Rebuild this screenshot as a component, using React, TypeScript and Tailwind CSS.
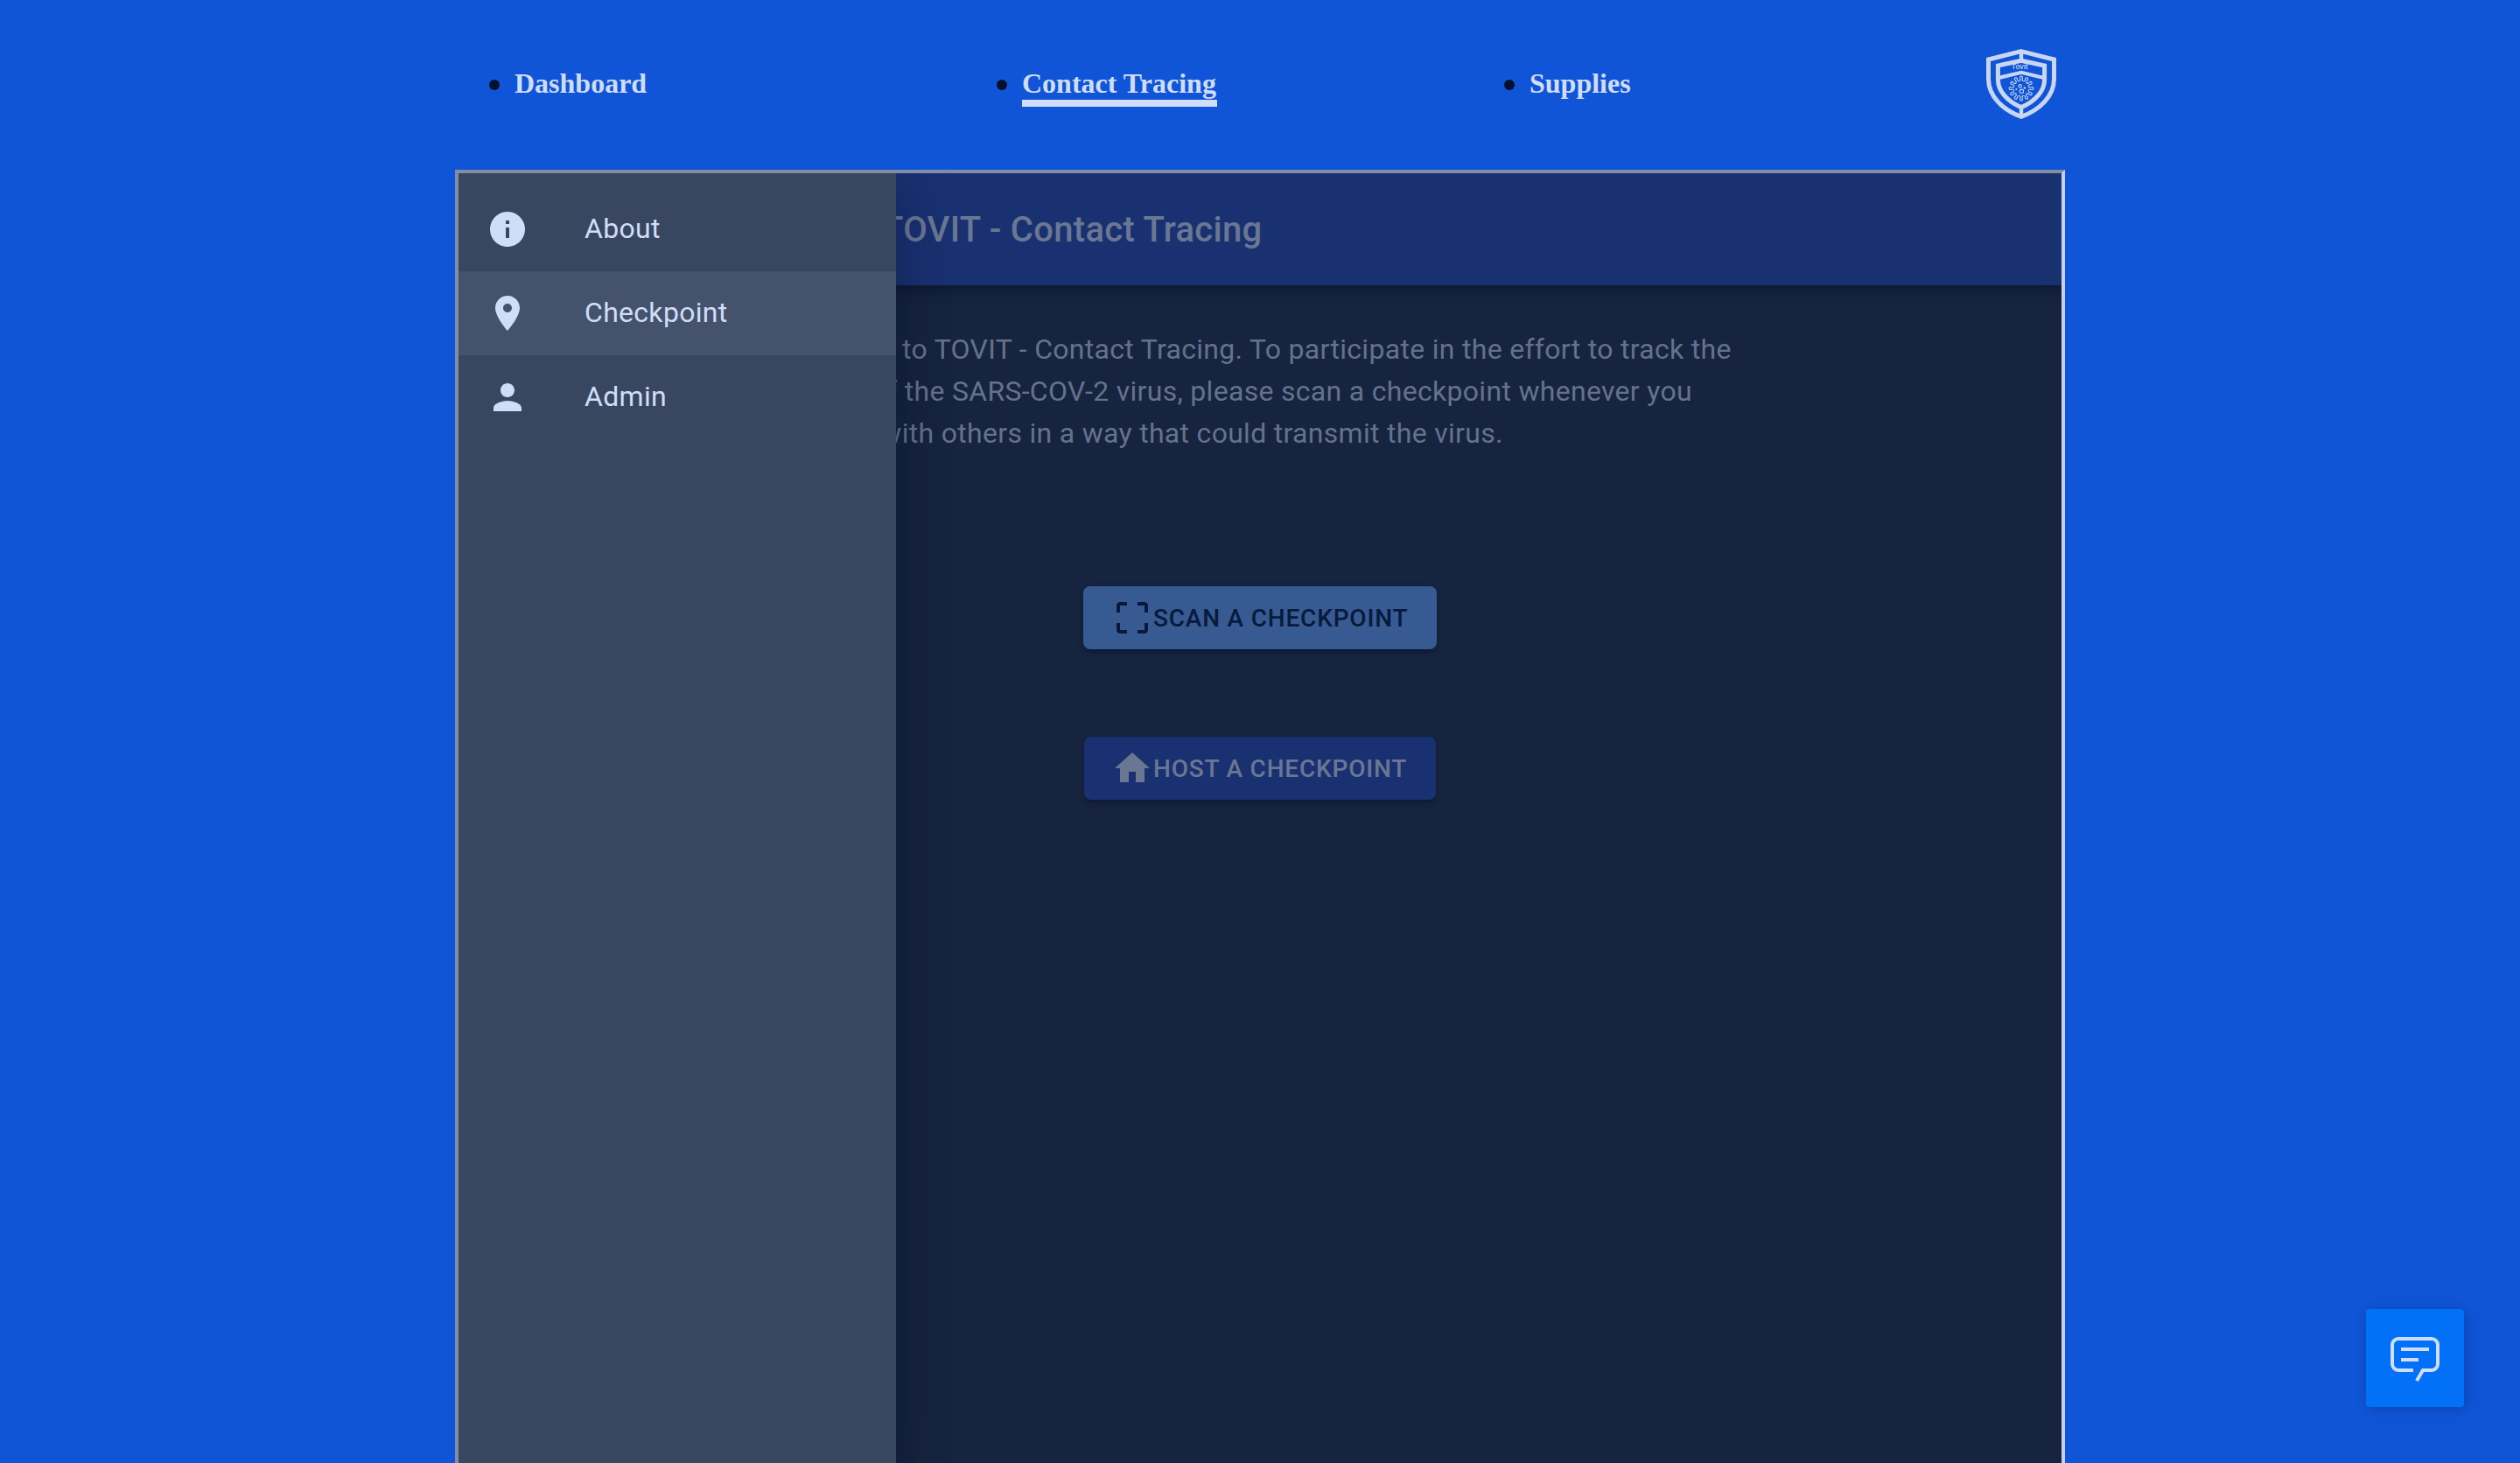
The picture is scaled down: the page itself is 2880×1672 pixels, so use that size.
import React from "react";

const navItems = [
  { label: "Dashboard", active: false },
  { label: "Contact Tracing", active: true },
  { label: "Supplies", active: false },
];

const iconPaths = {
  info: "M12 2C6.48 2 2 6.48 2 12s4.48 10 10 10 10-4.48 10-10S17.52 2 12 2zm1 15h-2v-6h2v6zm0-8h-2V7h2v2z",
  place: "M12 2C8.13 2 5 5.13 5 9c0 5.25 7 13 7 13s7-7.75 7-13c0-3.87-3.13-7-7-7zm0 9.5c-1.38 0-2.5-1.12-2.5-2.5s1.12-2.5 2.5-2.5 2.5 1.12 2.5 2.5-1.12 2.5-2.5 2.5z",
  person: "M12 12c2.21 0 4-1.79 4-4s-1.79-4-4-4-4 1.79-4 4 1.79 4 4 4zm0 2c-2.67 0-8 1.34-8 4v2h16v-2c0-2.66-5.33-4-8-4z",
  scan: "M3 5v4h2V5h4V3H5c-1.1 0-2 .9-2 2zm2 10H3v4c0 1.1.9 2 2 2h4v-2H5v-4zm14 4h-4v2h4c1.1 0 2-.9 2-2v-4h-2v4zm0-16h-4v2h4v4h2V5c0-1.1-.9-2-2-2z",
  home: "M10 20v-6h4v6h5v-8h3L12 3 2 12h3v8z",
};

function Icon({ name }: { name: keyof typeof iconPaths }) {
  return (
    <svg viewBox="0 0 24 24" className="size-12 shrink-0 fill-current">
      <path d={iconPaths[name]} />
    </svg>
  );
}

const spikes = Array.from({ length: 12 }, (_, i) => i * 30);

function Logo() {
  return (
    <svg viewBox="0 0 80 80" className="size-20" fill="none">
      <g stroke="#c8d6f2" strokeWidth="5">
        <path d="M40 2.6 L77.5 12 V34 C77.5 54 61 70 40 77.3 C19 70 2.5 54 2.5 34 V12 Z" />
        <path d="M40 13.2 L66.6 19 V35 C66.6 48 56 60 40 66.6 C24 60 13.4 48 13.4 35 V19 Z" />
        <path d="M14 33 L40 26.8 L66 33" strokeWidth="4.2" />
        <path d="M40 3 V13 M40 67 V77" strokeWidth="4.4" />
      </g>
      <text x="38.5" y="23.4" textAnchor="middle" fontFamily="Open Sans, sans-serif" fontWeight="600" fontSize="8" fill="#c8d6f2">
        Tovit
      </text>
      <g stroke="#c8d6f2" strokeWidth="1.1">
        {spikes.map((angle) => (
          <path
            key={angle}
            transform={`rotate(${angle} 40 45)`}
            d="M37.8 36.8 Q39.1 36.2 39 34.6 L38.6 33.2 a1.5 1.5 0 1 1 2.8 0 L41 34.6 Q40.9 36.2 42.2 36.8"
          />
        ))}
        <circle cx="38.7" cy="42.3" r="1.7" />
        <circle cx="40.4" cy="48.3" r="2.2" />
      </g>
      <g fill="#c8d6f2">
        <circle cx="43.9" cy="44.4" r="1.2" />
        <circle cx="34.4" cy="46" r="1" />
      </g>
    </svg>
  );
}

function DrawerItem({ icon, label, selected }: { icon: keyof typeof iconPaths; label: string; selected?: boolean }) {
  return (
    <li className={selected ? "flex h-24 items-center bg-[#44526b] px-8" : "flex h-24 items-center px-8"}>
      <span className="w-28">
        <Icon name={icon} />
      </span>
      <span className="pb-[2px] text-[32px] leading-[48px] tracking-[0.00938em]">{label}</span>
    </li>
  );
}

export default function App() {
  return (
    <div className="relative flex h-[1672px] w-[2880px] flex-col overflow-hidden bg-[#1055d8]">
      <header className="flex h-[194px] shrink-0 pl-[559px]">
        <ul className="flex pt-[78px] font-['Liberation_Serif',serif] text-[32px] leading-[34px] font-bold text-[#cfddf8]">
          {navItems.map((item) => (
            <li key={item.label} className="flex w-[580px] items-start">
              <span className="mt-[13px] mr-[17px] size-3 rounded-full bg-[#03112c]" />
              <a className={item.active ? "border-b-8 border-[#cfddf8] pr-px pb-[2px]" : ""}>{item.label}</a>
            </li>
          ))}
        </ul>
        <div className="-ml-[29px] pt-14">
          <Logo />
        </div>
      </header>

      <main className="ml-[520px] flex h-[1478px] w-[1840px] border-4 border-b-0 border-t-[#7f8da5] border-r-[#c3d1ea] border-l-[#7f8da5] bg-[#16243f] font-[Roboto,sans-serif]">
        <div className="relative flex w-full flex-col overflow-hidden">
          <div className="z-10 flex h-32 shrink-0 items-center bg-[#1a3171] pt-[2px] pl-[484px] shadow-[0_4px_8px_-2px_rgba(3,17,44,0.2),0_8px_10px_0_rgba(3,17,44,0.14),0_2px_20px_0_rgba(3,17,44,0.12)]">
            <h1 className="text-[40px] leading-[64px] font-medium tracking-[0.0075em] text-[#697792]">TOVIT - Contact Tracing</h1>
          </div>
          <p className="mt-[49px] ml-[364px] text-[32px] leading-[48px] tracking-[0.00938em] whitespace-nowrap text-[#64728e]">
            Welcome to TOVIT - Contact Tracing. To participate in the effort to track the
            <br />
            spread of the SARS-COV-2 virus, please scan a checkpoint whenever you
            <br />
            interact with others in a way that could transmit the virus.
          </p>
          <div className="mt-[151px] flex flex-col items-center gap-[100px] text-[28px] leading-[49px] font-medium tracking-[0.02857em]">
            <button className="flex h-[72px] w-[404px] items-center rounded-lg bg-[#375a92] px-8 whitespace-nowrap text-[#071a3c] shadow-[0_6px_2px_-4px_rgba(3,17,44,0.2),0_4px_4px_0_rgba(3,17,44,0.14),0_2px_10px_0_rgba(3,17,44,0.12)]">
              <Icon name="scan" />
              SCAN A CHECKPOINT
            </button>
            <button className="flex h-[72px] w-[402px] items-center rounded-lg bg-[#1a3171] pr-8 pl-[31px] whitespace-nowrap text-[#697792] shadow-[0_6px_2px_-4px_rgba(3,17,44,0.2),0_4px_4px_0_rgba(3,17,44,0.14),0_2px_10px_0_rgba(3,17,44,0.12)]">
              <Icon name="home" />
              HOST A CHECKPOINT
            </button>
          </div>

          <nav className="absolute inset-y-0 left-0 z-20 w-[500px] bg-[#384660] text-[#cfddf8] shadow-[0_16px_20px_-10px_rgba(3,17,44,0.2),0_32px_48px_4px_rgba(3,17,44,0.14),0_12px_60px_10px_rgba(3,17,44,0.12)]">
            <ul className="pt-4">
              <DrawerItem icon="info" label="About" />
              <DrawerItem icon="place" label="Checkpoint" selected />
              <DrawerItem icon="person" label="Admin" />
            </ul>
          </nav>
        </div>
      </main>

      <button className="absolute right-16 bottom-16 size-28 rounded bg-[#0370f8] shadow-[2px_2px_16px_0_rgba(3,17,44,0.25)]">
        <svg viewBox="0 0 112 112" className="size-28" fill="none" stroke="#cfddf8" strokeWidth="4">
          <path d="M54 70H37a7 7 0 0 1-7-7V41a7 7 0 0 1 7-7H75a7 7 0 0 1 7 7V63a7 7 0 0 1-7 7H65L58 82" />
          <path d="M40 46H72M40 58H60" />
        </svg>
      </button>
    </div>
  );
}
